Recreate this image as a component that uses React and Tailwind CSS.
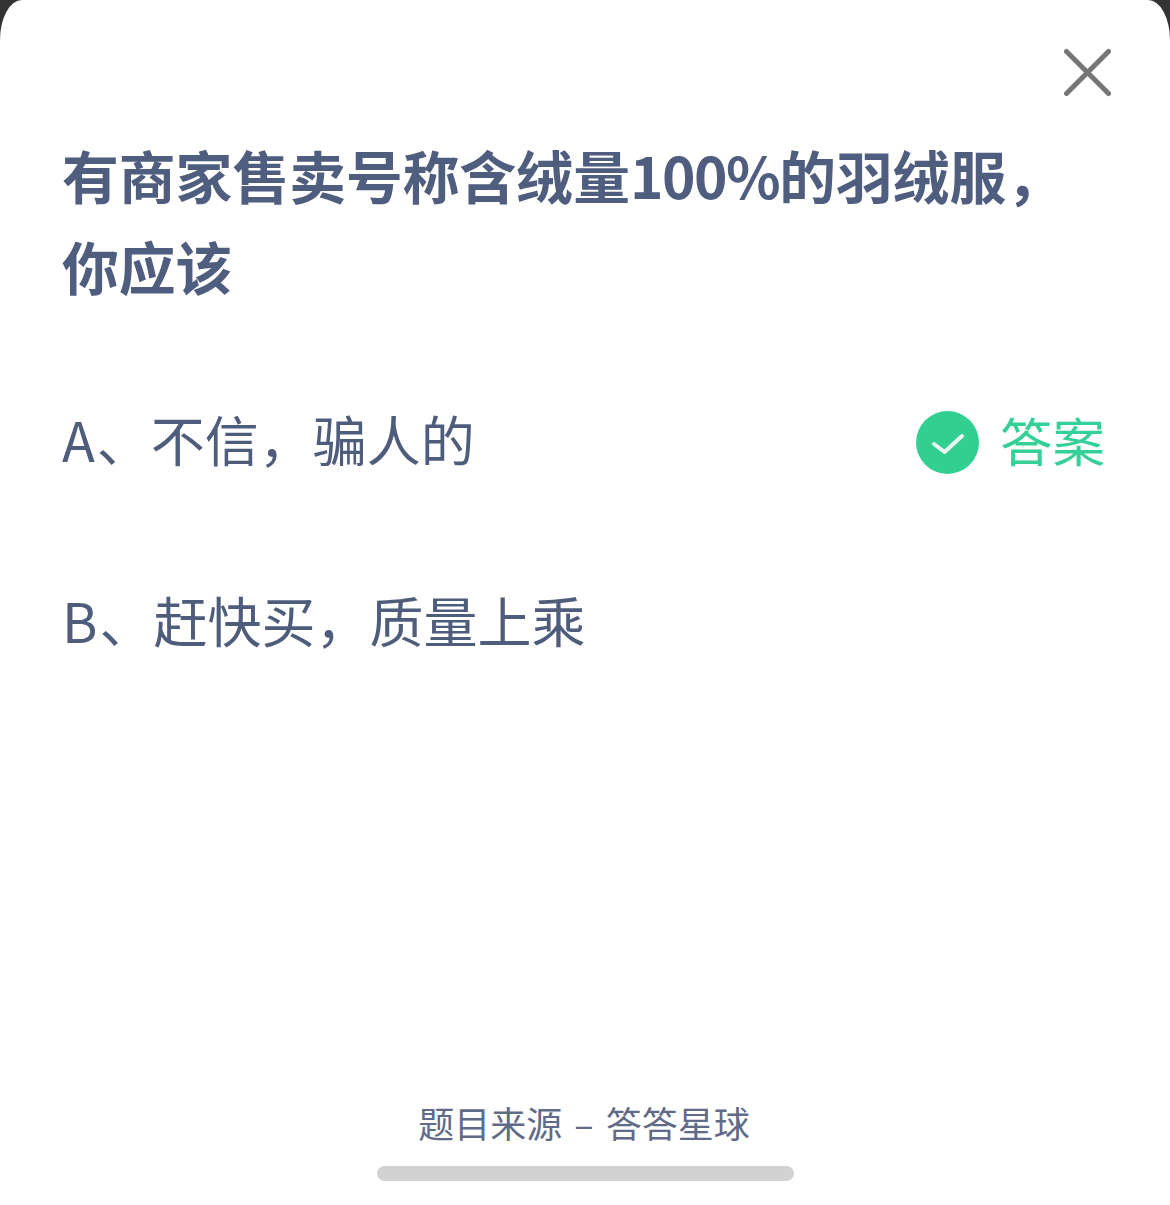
import React from "react";

const cjk = "font-['Noto_Sans_CJK_SC','Liberation_Sans',sans-serif]";

const CloseIcon = () => (
  <svg width="50" height="50" viewBox="0 0 50 50" fill="none">
    <path d="M5.5 3.5L47.5 45.5M47.5 3.5L5.5 45.5" stroke="#757575" strokeWidth="5" strokeLinecap="round" />
  </svg>
);

const CheckBadge = () => (
  <svg width="63" height="63" viewBox="0 0 63 63">
    <circle cx="31.5" cy="31.5" r="31.5" fill="#31d091" />
    <path d="M18 33L28.5 41L46 25" fill="none" stroke="#eafaf3" strokeWidth="4" strokeLinecap="round" strokeLinejoin="round" />
  </svg>
);

const Option = ({ letter, label, answer }) => (
  <div className="flex items-center justify-between h-[63px]">
    <span className="text-[54px] leading-[63px] pb-[8px] text-[#4f5d7c]">
      <span className="mr-[2px]">{letter}</span>
      {label}
    </span>
    {answer && (
      <div className="flex items-center gap-[21px] pr-[1px]">
        <CheckBadge />
        <span className="text-[52.5px] leading-[63px] pb-[6px] text-[#34d097]">答案</span>
      </div>
    )}
  </div>
);

export default function App() {
  return (
    <div className={`h-[1205px] w-[1170px] bg-[#333333] overflow-hidden ${cjk}`}>
      <div className="h-full bg-white rounded-tl-[22px_40px] rounded-tr-[22px_40px] flex flex-col pl-[62px] pr-[64px]">
        <div className="flex justify-end pt-[48px] -mr-[5px] h-[98px]">
          <CloseIcon />
        </div>
        <h1 className="mt-[31px] text-[56.8px] leading-[91px] font-bold text-[#4f5d7f]">
          有商家售卖号称含绒量<span className="tracking-[-1.5px]">100%</span>的羽绒服，
          <br />
          你应该
        </h1>
        <div className="mt-[100px] flex flex-col gap-[118px]">
          <Option letter="A" label="、不信，骗人的" answer />
          <Option letter="B" label="、赶快买，质量上乘" />
        </div>
        <div className="mt-auto flex flex-col items-center pb-[24px] ml-[3px]">
          <span className="text-[36px] leading-[44px] -ml-[3px] text-[#5f6b88]">
            题目来源<span className="mx-[4px]"> – </span>答答星球
          </span>
          <div className="mt-[22px] w-[417px] h-[15px] rounded-full bg-[#d2d2d2]" />
        </div>
      </div>
    </div>
  );
}
